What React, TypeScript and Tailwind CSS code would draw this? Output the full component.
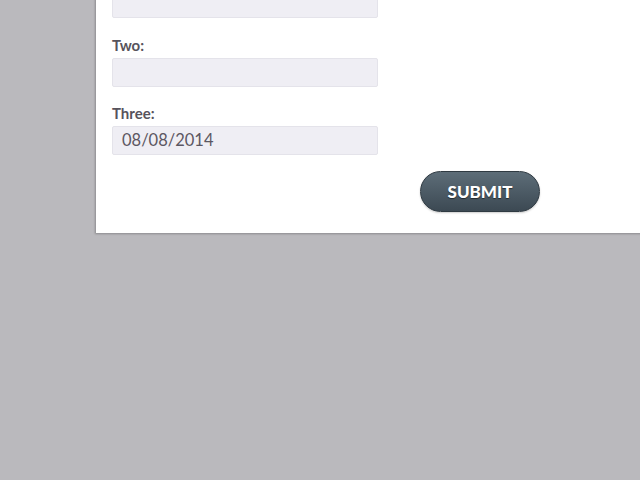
import React from "react";

const Field: React.FC<{ label: string; value?: string }> = ({ label, value }) => (
  <div className="flex flex-col">
    <label className="text-[15px] leading-[16px] font-bold text-[#57535c] mb-[5px]">{label}</label>
    <div className="w-[266px] h-[29px] rounded-[2px] bg-[#efeef4] border border-[#e4e3ea] px-[9px] flex items-center text-[16.5px] text-[#5c5762]">
      {value}
    </div>
  </div>
);

export default function App() {
  return (
    <div className="w-[640px] h-[480px] bg-[#bab9bd] overflow-hidden" style={{ fontFamily: "Lato, 'Open Sans', sans-serif" }}>
      <div className="ml-[96px] bg-white shadow-[-1px_1px_2px_rgba(0,0,0,0.25)] pl-[16px] pb-[21px] w-[560px]">
        <div className="flex flex-col w-[428px] -mt-[11px]">
          <div className="w-[266px] h-[29px] rounded-[2px] bg-[#efeef4] border border-[#e4e3ea]" />
          <div className="mt-[19px]">
            <Field label="Two:" />
          </div>
          <div className="mt-[18px]">
            <Field label="Three:" value="08/08/2014" />
          </div>
          <div className="flex justify-end mt-[16px]">
            <button className="w-[120px] h-[41px] rounded-full border border-[#2f3a42] bg-[linear-gradient(#5d6d78,#3c4953)] shadow-[0_1px_2px_rgba(0,0,0,0.2)] text-white font-black text-[17px] [text-shadow:0_1px_1px_rgba(0,0,0,0.5)]">
              SUBMIT
            </button>
          </div>
        </div>
      </div>
    </div>
  );
}
